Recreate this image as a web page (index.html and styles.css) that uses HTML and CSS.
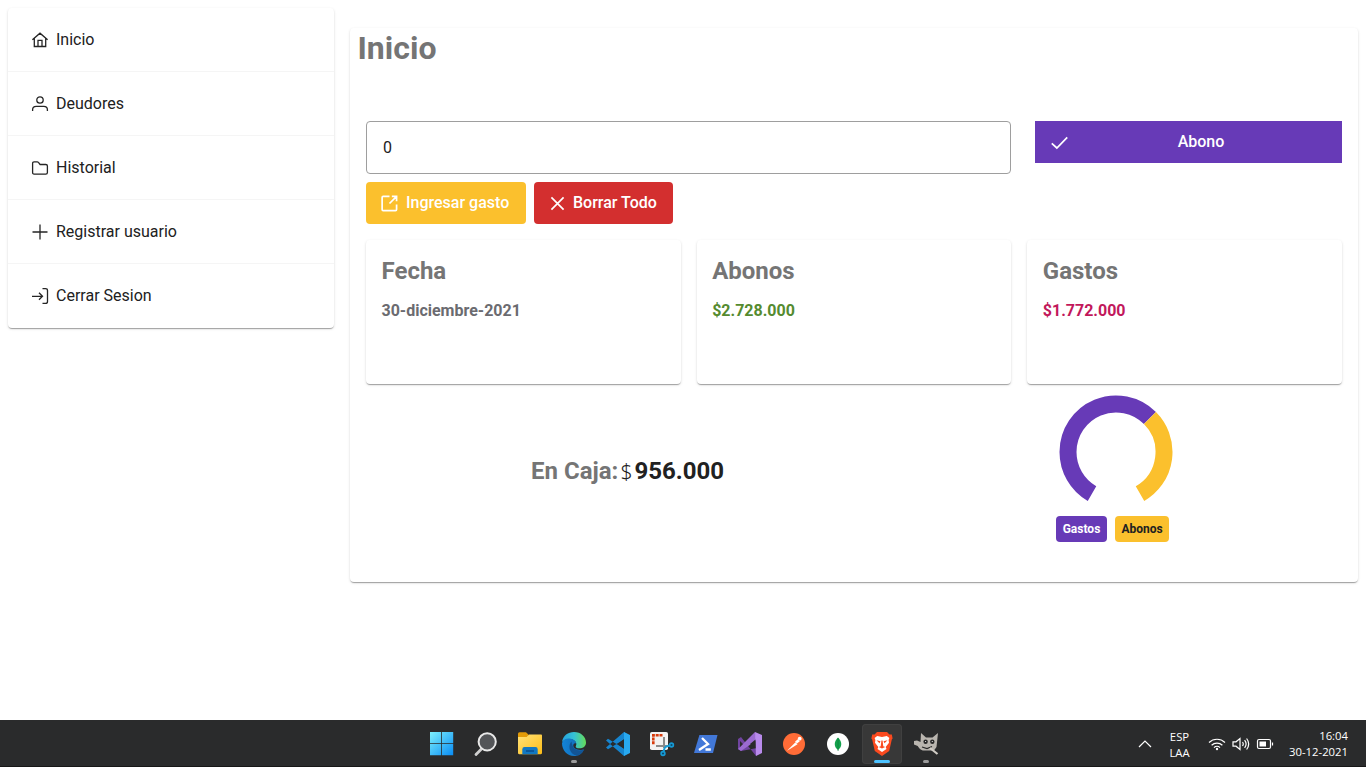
FILE: index.html
```html
<!DOCTYPE html>
<html lang="es">
<head>
<meta charset="utf-8">
<title>Inicio</title>
<link rel="stylesheet" href="styles.css">
</head>
<body>
<div class="page">
  <nav class="menu card">
    <a class="menu-item"><svg class="icon" viewBox="0 0 16 16"><path d="M.4 7.800 8 1.200l7.600 6.600M2.300 6.500v8h11.400v-8M6 14.500V8.300h4v6.200"/></svg>Inicio</a>
    <a class="menu-item"><svg class="icon" viewBox="0 0 16 16"><circle cx="8" cy="4" r="3.200"/><path d="M.6 15v-1.200c0-2.200 1.500-3.400 3.600-3.400h7.600c2.100 0 3.600 1.200 3.600 3.400V15"/></svg>Deudores</a>
    <a class="menu-item"><svg class="icon" viewBox="0 0 16 16"><path d="M.6 12.400V3.400c0-1.100.5-1.600 1.500-1.600h3c.6 0 1 .2 1.300.6l1.700 2.100h5.700c1 0 1.600.5 1.600 1.500v6.400c0 1.100-.6 1.800-1.600 1.800H2.100c-1 0-1.500-.7-1.500-1.800z"/></svg>Historial</a>
    <a class="menu-item"><svg class="icon" viewBox="0 0 16 16"><path d="M8 .5v15M.5 8h15"/></svg>Registrar usuario</a>
    <a class="menu-item"><svg class="icon" viewBox="0 0 16 16"><path d="M0 8.300h10.500M7 4.800l3.500 3.500L7 11.800M10.500.6h3c1.300 0 2 .6 2 1.800v11c0 1.300-.7 2-2 2h-3"/></svg>Cerrar Sesion</a>
  </nav>
  <main class="panel card">
    <h1 class="title">Inicio</h1>
    <section class="entry">
      <div class="entry-main">
        <input class="amount" type="text" value="0">
        <div class="actions">
          <button class="btn btn-warning"><svg class="btn-icon" viewBox="0 0 18 18"><path d="M9 1.500H2.300c-.7 0-1.100.4-1.100 1.100v12.800c0 .7.4 1.100 1.100 1.100h13.100c.7 0 1.100-.4 1.100-1.100V10M11.500 1.500h5v5M16.500 1.500 9 9"/></svg><span>Ingresar gasto</span></button>
          <button class="btn btn-danger"><svg class="btn-icon btn-icon-x" viewBox="0 0 16 16"><path d="m1.500 1.500 13 13M14.500 1.500l-13 13"/></svg><span>Borrar Todo</span></button>
        </div>
      </div>
      <button class="btn btn-primary"><svg class="btn-icon" viewBox="0 0 18 18"><path d="m.8 9.800 5.400 5L17.200 3.600"/></svg><span class="btn-label">Abono</span></button>
    </section>
    <section class="stats">
      <article class="stat card"><h2 class="stat-title">Fecha</h2><p class="stat-value">30-diciembre-2021</p></article>
      <article class="stat card"><h2 class="stat-title">Abonos</h2><p class="stat-value income">$2.728.000</p></article>
      <article class="stat card"><h2 class="stat-title">Gastos</h2><p class="stat-value expense">$1.772.000</p></article>
    </section>
    <section class="summary">
      <div class="balance"><span class="balance-label">En Caja:</span><span class="balance-sign">$</span><span class="balance-value">956.000</span></div>
      <div class="chart">
        <svg class="gauge" viewBox="-57 -57 114 114"><path class="gauge-spent" d="M-24 41.570A48 48 0 0 1 -48 0A48 48 0 0 1 33.940-33.940"/><path class="gauge-paid" d="M33.940-33.940A48 48 0 0 1 24 41.570"/></svg>
        <div class="legend"><span class="badge badge-spent">Gastos</span><span class="badge badge-paid">Abonos</span></div>
      </div>
    </section>
  </main>
</div>
<footer class="taskbar">
  <div class="apps">
    <div class="app"><svg viewBox="0 0 26 26"><defs><linearGradient id="win" gradientUnits="userSpaceOnUse" x1="1" y1="1" x2="24" y2="24"><stop stop-color="#7df0fc"/><stop offset="1" stop-color="#0a8df5"/></linearGradient></defs><path fill="url(#win)" d="M1 1h11.200v11.200H1zM13 1h11.200v11.200H13zM1 13h11.200v11.200H1zM13 13h11.200v11.200H13z"/></svg></div>
    <div class="app"><svg viewBox="0 0 26 26"><path d="m9.200 17.200-6.200 6.300" stroke="#d0d0d0" stroke-width="2.800" stroke-linecap="round"/><circle cx="14.200" cy="10.800" r="8.600" fill="#535558" stroke="#e8e8e8" stroke-width="2"/></svg></div>
    <div class="app"><svg viewBox="0 0 26 26"><defs><linearGradient id="fold" x1="0" y1="0" x2="1" y2="1"><stop stop-color="#ffe27a"/><stop offset="1" stop-color="#fdbd17"/></linearGradient></defs><path fill="#e29b08" d="M1 3c0-1 .5-1.700 1.500-1.700H9l2.600 2.400V9H1z"/><path fill="url(#fold)" d="M1 6h8.700L12 3.400h11.800c.8 0 1.200.5 1.200 1.200V22c0 .7-.5 1.200-1.200 1.200H2.200C1.500 23.200 1 22.700 1 22z"/><path fill="#1278c2" d="M5.300 23.200v-4.700q0-2.400 2.200-2.400h11q2.200 0 2.200 2.400v4.700z"/><path fill="#0b579b" d="M9 19h8v2H9z"/></svg></div>
    <div class="app running"><svg viewBox="0 0 26 26"><defs><linearGradient id="edge1"><stop stop-color="#25a3e0"/><stop offset=".5" stop-color="#35c1d5"/><stop offset="1" stop-color="#65dc58"/></linearGradient><linearGradient id="edge2"><stop stop-color="#1284d9"/><stop offset="1" stop-color="#1466ac"/></linearGradient></defs><path fill="url(#edge1)" d="M1 11C2 4.500 7 1 13 1c7 0 12 5 12 10.500 0 4-3 5.800-6.500 5.800-2.500 0-4.500-1-3.500-2.600C16.800 11 12 7.500 7.500 8 4 8.400 2 10 1 11z"/><path fill="url(#edge2)" d="M1 12c1.200-3.400 4.200-4.800 7.500-4.500 3.300.3 6.300 2 6.800 5C11 11.300 10.500 19 19 19c2 0 3-.8 4-.5C21 23 17.500 25 13 25 6 25 1 19.300 1 12z"/><path fill="#125494" d="M10.500 10.500C7 13.700 7.500 23 16 24.600c3-.6 5.300-2.500 7-6.100-5 2.100-11.500 1-12.500-8z"/></svg></div>
    <div class="app"><svg viewBox="0 0 26 26"><path fill="#1684ce" d="m1 9.500 2-1.700L24.500 21 19 25zM1 16.500l2 1.700L24.500 5 19 1z"/><path fill="#28a9f0" d="m19 1 6 3v18l-6 3z"/><path fill="#2b2b2b" d="M19 8.200v9.600L12.800 13z"/></svg></div>
    <div class="app"><svg viewBox="0 0 26 26"><rect x="1" y="1" width="18" height="18" rx="1.800" fill="#f3f3f3"/><path d="M13.500 4.300H4.300v9.700" fill="none" stroke="#d83b0c" stroke-width="2.600" stroke-dasharray="3 .8"/><path fill="#8b8b8b" d="M14 6h2v11h-2zM7 14h14v2H7z"/><path fill="none" stroke="#159bd6" stroke-width="2" d="m16 16-2 6m2-6 6-2"/><circle cx="14" cy="22.500" r="1.900" fill="#124a69" stroke="#159bd6" stroke-width="1.600"/><circle cx="22.500" cy="14" r="1.900" fill="#124a69" stroke="#159bd6" stroke-width="1.600"/></svg></div>
    <div class="app"><svg viewBox="0 0 26 26"><path fill="#4278d8" d="M6.400 4H24.500L20 22H1z"/><path fill="none" stroke="#fff" stroke-width="2.300" d="m9 7 6 6-9 6M12.500 18.500h5.300"/></svg></div>
    <div class="app"><svg viewBox="0 0 26 26"><path fill="#70449f" d="m1 8 3-2 15 19 1-8L4 20l-3-2z"/><path fill="#9b6bd0" d="m4 20-3-2L18 1l2 8z"/><path fill="#b98bec" d="m18 1 7 3v18l-6 3z"/><path fill="#2b2b2b" d="M18.500 8.500v9L13 13zM3 10v6l3-3z"/></svg></div>
    <div class="app"><svg viewBox="0 0 26 26"><circle cx="13" cy="13" r="11" fill="#ff6c37"/><path d="m6 19.800 8.500-8.500 2 2L9 18z" fill="#fff"/><path d="m14 10.700 2.800-2.400 2 2-2.800 2.200" fill="#fff"/><circle cx="18.700" cy="7.700" r="1.900" fill="#fff"/></svg></div>
    <div class="app"><svg viewBox="0 0 26 26"><circle cx="13" cy="13" r="11" fill="#fff"/><path fill="#13a14c" d="M13 6.500c4.700 4.500 4 9.500 0 12.500-4-3-4.700-8 0-12.500z"/><path fill="#0b7f3b" d="M12.700 7v13h.7V7z"/></svg></div>
    <div class="app active"><svg viewBox="0 0 26 26"><path fill="#fb4a1f" d="M8 1h10l2.500 2.600 2.300-.2.800 4-.8 1.200-2.600 11.500L13 25l-7.200-4.900L3.200 8.600l-.8-1.200.8-4 2.300.2z"/><path fill="#fff" d="m5.600 7 2.600-2 4.800 1 4.800-1 2.600 2-.8 2 .4 2.700-3.300 4.200.8 2.200L13 21l-4.500-2.900.8-2.200L6 11.700 6.400 9z"/><path fill="#fb4a1f" d="m7.500 9.200 4 1-1 2zm11 0-4 1 1 2zM12.400 9.500h1.200l.7 6H11.700zM9.800 16l3.200-1.200 3.200 1.200L13 17.400z"/></svg></div>
    <div class="app running"><svg viewBox="0 0 26 26"><path fill="#b9b5af" d="m8 2 5 4.500h6.500L25 2l-1.500 14-2.500 3.500H11c-3.500 0-5-2.500-6.300-4.500L1 13.500l0-3.500 3-.5 3.500 1.500z"/><circle cx="12.600" cy="10.800" r="2.200" fill="#292929"/><circle cx="19.300" cy="10.800" r="2.200" fill="#292929"/><path fill="#ddd" d="M12.100 10h1v1h-1zM18.800 10h1v1h-1z"/><path d="m9 16 5 1.500 5-2" stroke="#292929" stroke-width="1.300" fill="none"/><path d="m17 17 7.500 6" stroke="#d0ccc5" stroke-width="2.200"/></svg></div>
  </div>
  <div class="tray">
    <svg class="tray-up" viewBox="0 0 14 10"><path d="m1 8 6-6 6 6"/></svg>
    <div class="lang"><span>ESP</span><span>LAA</span></div>
    <div class="tray-icons">
      <svg viewBox="0 0 18 16"><path d="M1 6.500a11.500 11.500 0 0 1 16 0M3.600 9.200a7.800 7.800 0 0 1 10.800 0M6 11.600a4.300 4.300 0 0 1 6 0"/><circle cx="9" cy="13" r="1.200" fill="#fff" stroke="none"/></svg>
      <svg viewBox="0 0 18 16"><path d="M1 5.800h3L8 2.500v11L4 10.200H1zM10.500 6q1.500 2 0 4M12.600 4.200q3 3.800 0 7.600M14.600 2.500q4.200 5.500 0 11"/></svg>
      <svg viewBox="0 0 18 16"><rect x="1.500" y="3.500" width="13" height="9" rx="1.500"/><path d="M16.500 6.500v3"/><path d="M3.500 5.500H10v5H3.500z" fill="#fff" stroke="none"/></svg>
    </div>
    <div class="clock"><span>16:04</span><span>30-12-2021</span></div>
  </div>
</footer>
</body>
</html>
```
FILE: styles.css
```css
* { box-sizing: border-box; }
body {
  margin: 0;
  height: 767px;
  overflow: hidden;
  display: flex;
  flex-direction: column;
  background: #fff;
  color: #212121;
  font: 16px/24px Roboto, sans-serif;
}
.page {
  flex: 1;
  display: grid;
  grid-template-columns: 326px 1008px;
  gap: 16px;
  align-items: start;
  padding: 8px;
}
.card {
  background: #fff;
  border-radius: 4px;
  box-shadow: 0 2px 1px -1px rgba(0,0,0,.2), 0 1px 1px 0 rgba(0,0,0,.14), 0 1px 3px 0 rgba(0,0,0,.12);
}
.menu-item {
  display: flex;
  align-items: center;
  gap: 8px;
  height: 64px;
  padding: 0 24px;
  border-bottom: 1px solid #f5f5f5;
}
.menu-item:last-child { border-bottom-color: transparent; }
.icon {
  width: 16px;
  height: 16px;
  margin-top: 1px;
  fill: none;
  stroke: #252525;
  stroke-width: 1.3;
  overflow: visible;
}
.panel {
  height: 554px;
  margin-top: 20px;
  padding: 0 16px;
}
.title {
  margin: 0 0 53px -8.5px;
  color: #757575;
  font-size: 32px;
  line-height: 40px;
  font-weight: 700;
}
.entry {
  display: grid;
  grid-template-columns: 645px 307px;
  gap: 24px;
  align-items: start;
}
.amount {
  display: block;
  width: 100%;
  height: 53px;
  padding: 0 16px;
  border: 1px solid #9e9e9e;
  border-radius: 4px;
  font: 16px Roboto, sans-serif;
  color: #212121;
}
.actions { display: flex; gap: 8px; margin-top: 8px; }
.btn {
  display: flex;
  align-items: center;
  height: 42px;
  padding: 0 16px;
  gap: 8px;
  border: 0;
  border-radius: 4px;
  color: #fff;
  font: 500 16px Roboto, sans-serif;
  white-space: nowrap;
}
.btn span { padding-bottom: 2px; }
.btn-warning { width: 160px; padding: 0 15px; background: #fbc02d; }
.btn-danger { width: 139px; background: #d32f2f; }
.btn-primary { border-radius: 0; background: #673ab7; }
.btn-label { flex: 1; text-align: center; }
.btn-icon { width: 17px; height: 17px; flex: none; fill: none; stroke: #fff; stroke-width: 1.8; }
.btn-icon-x { width: 15px; }
.stats {
  display: grid;
  grid-template-columns: repeat(3, 1fr);
  gap: 16px;
  margin-top: 16px;
}
.stat { height: 144px; padding: 15px 15.500px; }
.stat-title { margin: 0; font-size: 24px; line-height: 32px; font-weight: 700; color: #757575; }
.stat-value { margin: 12px 0 0; font-weight: 700; color: #6b6b70; }
.income { color: #558b2f; }
.expense { color: #c2185b; }
.summary { display: grid; grid-template-columns: 690px 1fr; }
.balance {
  display: flex;
  justify-content: center;
  align-items: center;
  height: 30px;
  margin: 72px 167px 0 0;
  font-size: 24px;
}
.balance-label { font-weight: 700; color: #757575; }
.balance-sign { font-family: "Noto Sans", sans-serif; font-size: 21px; font-weight: 300; margin: 0 2px; }
.balance-value { font-weight: 700; }
.chart { display: flex; flex-direction: column; align-items: flex-start; padding-top: 11px; }
.gauge { width: 114px; height: 114px; margin-left: 3px; fill: none; stroke-width: 17; }
.gauge-spent { stroke: #673ab7; }
.gauge-paid { stroke: #fbc02d; }
.legend { display: flex; gap: 8px; margin-top: 7px; }
.badge {
  height: 26px;
  border-radius: 4px;
  font-size: 12px;
  line-height: 26px;
  font-weight: 700;
  text-align: center;
}
.badge-spent { width: 51px; background: #673ab7; color: #fff; }
.badge-paid { width: 54px; background: #fbc02d; color: #212121; }
.taskbar {
  display: flex;
  height: 47px;
  background: #2a2b2c;
  color: #fff;
  border-bottom: 1px solid #171717;
}
.apps { display: flex; gap: 4px; padding: 4px 0 0 422px; }
.app { position: relative; display: flex; align-items: center; justify-content: center; width: 40px; height: 40px; border-radius: 4px; }
.app svg { width: 26px; height: 26px; }
.app.active { background: #383838; box-shadow: inset 0 0 0 1px #404040; }
.app.running::after, .app.active::after {
  content: "";
  position: absolute;
  left: 17px;
  bottom: 1px;
  width: 6px;
  height: 3px;
  border-radius: 2px;
  background: #9b9b9b;
}
.app.active::after { left: 12px; width: 16px; background: #4cc2ff; }
.tray {
  display: flex;
  align-items: center;
  margin-left: auto;
  padding-right: 18px;
  font: 11.300px/16px "Open Sans", sans-serif;
}
.tray svg { fill: none; stroke: #fff; stroke-width: 1.2; }
.tray-up { width: 14px; height: 10px; margin: 2px 16px 0 0; }
.lang, .clock { display: flex; flex-direction: column; padding-top: 3px; }
.lang { align-items: center; width: 23px; }
.lang { padding-top: 4px; }
.clock { padding-top: 1px; }
.tray-icons { display: flex; gap: 6px; margin: 1px 15px 0 17px; }
.tray-icons svg { width: 18px; height: 16px; }
.clock { align-items: flex-end; width: 59px; white-space: nowrap; }
```
